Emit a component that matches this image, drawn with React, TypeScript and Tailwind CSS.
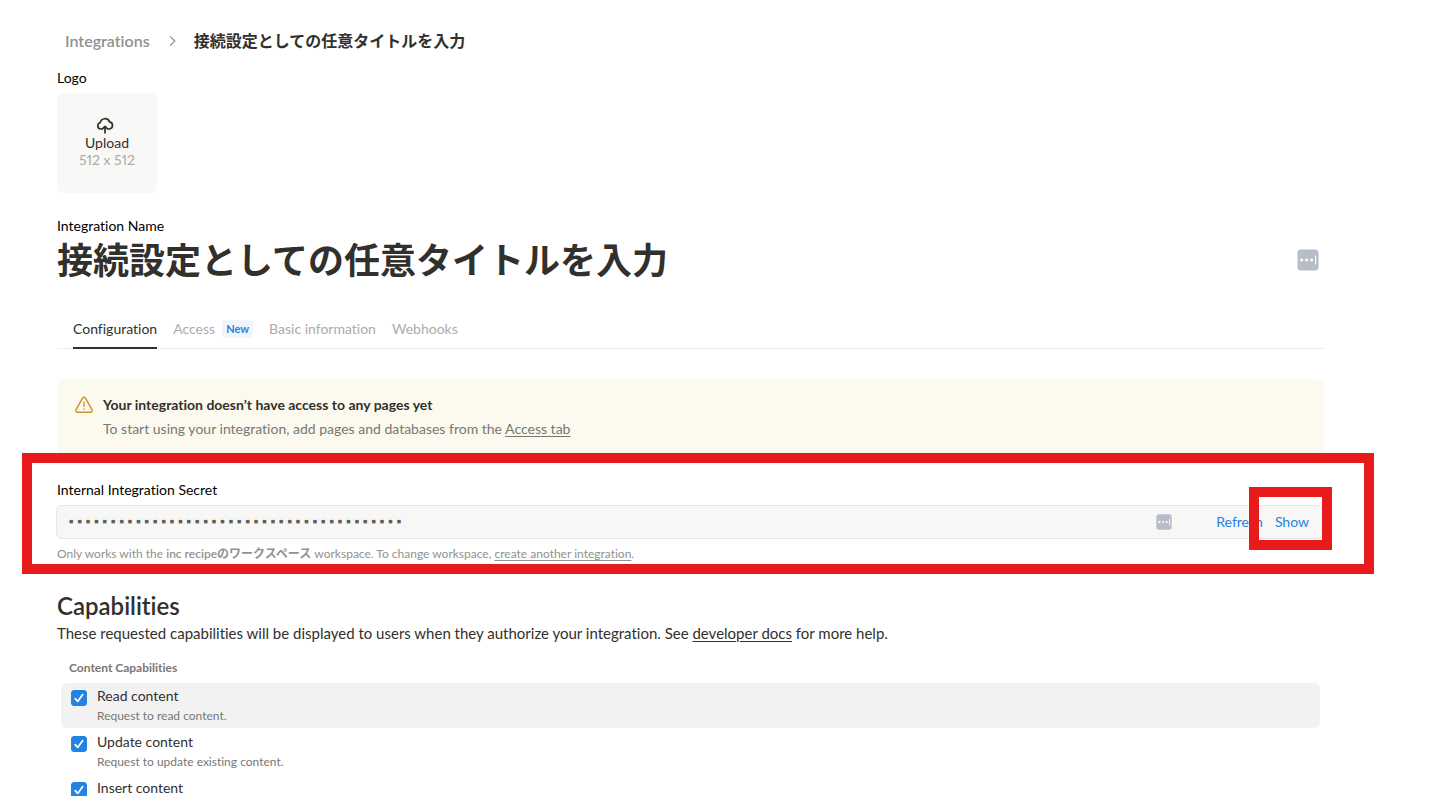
import clsx from "clsx";
import { useState } from "react";

const tabs = [
  { name: "Configuration" },
  { name: "Access", badge: "New" },
  { name: "Basic information" },
  { name: "Webhooks" },
];

const contentCapabilities = [
  {
    id: "read",
    name: "Read content",
    description: "Request to read content.",
    highlighted: true,
  },
  {
    id: "update",
    name: "Update content",
    description: "Request to update existing content.",
  },
  {
    id: "insert",
    name: "Insert content",
    description: "Request to insert new content.",
  },
];

const TITLE = "接続設定としての任意タイトルを入力";
const SECRET = "0".repeat(40);

const PasswordManagerIcon = ({ className }: { className?: string }) => (
  <svg viewBox="0 0 22 22" className={className} aria-hidden="true">
    <rect x="0.5" y="0.5" width="21" height="21" rx="3.5" fill="#b6bdc9" />
    <circle cx="4.6" cy="11" r="1.5" fill="#fff" />
    <circle cx="9.6" cy="11" r="1.5" fill="#fff" />
    <circle cx="14.6" cy="11" r="1.5" fill="#fff" />
    <rect x="18" y="6.5" width="1.2" height="9" fill="#fff" />
  </svg>
);

const UploadIcon = () => (
  <svg
    viewBox="0 0 18 18"
    className="mr-1 h-[18px] w-[18px]"
    fill="none"
    stroke="#32302c"
    strokeWidth="1.7"
    strokeLinejoin="round"
    aria-hidden="true"
  >
    <path d="M6 13H4.8A3.2 3.2 0 0 1 4.2 6.7A4.9 4.9 0 0 1 13.6 5.9A3.6 3.6 0 0 1 13.4 13H12" />
    <path d="M9 17.6V10.6M5.9 13.4L9 10.3L12.1 13.4" />
  </svg>
);

const WarningIcon = () => (
  <svg
    viewBox="0 0 18 18"
    className="h-[18px] w-[18px] shrink-0"
    fill="none"
    stroke="#cb912f"
    strokeWidth="1.4"
    strokeLinecap="round"
    strokeLinejoin="round"
    aria-hidden="true"
  >
    <path d="M7.5 2.1Q9 0.2 10.5 2.1L16.9 13.6Q17.8 16.1 15.6 16.3H2.4Q0.2 16.1 1.1 13.6Z" />
    <path d="M9 6.2V10.2M9 12.9V13.2" />
  </svg>
);

interface CapabilityRowProps {
  id: string;
  name: string;
  description: string;
  highlighted?: boolean;
}

const CapabilityRow = ({
  id,
  name,
  description,
  highlighted,
}: CapabilityRowProps) => (
  <label
    htmlFor={id}
    className={clsx(
      "flex h-[45px] cursor-pointer gap-[10px] rounded-md px-[10px]",
      highlighted && "bg-[#f2f2f2]"
    )}
  >
    <span className="mt-[7px] grid h-4 w-4 shrink-0">
      <input
        id={id}
        type="checkbox"
        defaultChecked
        className="peer col-start-1 row-start-1 h-4 w-4 appearance-none rounded-[3px] border border-[#2383e2] checked:bg-[#2383e2]"
      />
      <svg
        viewBox="0 0 16 16"
        className="pointer-events-none invisible col-start-1 row-start-1 h-4 w-4 peer-checked:visible"
        fill="none"
        stroke="#fff"
        strokeWidth="1.7"
        strokeLinecap="round"
        strokeLinejoin="round"
        aria-hidden="true"
      >
        <path d="M4.2 8.6L6.7 11.4L11.7 4.6" />
      </svg>
    </span>
    <span className="flex flex-col pt-[3px]">
      <span className="text-sm leading-5 text-[#32302c]">{name}</span>
      <span className="text-xs leading-5 text-[#787774]">{description}</span>
    </span>
  </label>
);

export default function App() {
  const [activeTab, setActiveTab] = useState("Configuration");
  const [shown, setShown] = useState(false);

  return (
    <main className="h-screen overflow-y-auto bg-white pt-[27px] pr-[107px] pl-[57px] font-['Lato','Noto_Sans_CJK_JP',sans-serif] text-sm text-[#32302c] [font-variant-ligatures:none] [scrollbar-width:none]">
      <nav className="flex h-7 items-center px-2 text-base leading-7">
        <a href="#" className="font-semibold text-[#91918e]">
          Integrations
        </a>
        <svg
          viewBox="0 0 12 12"
          className="mx-4 h-3 w-3"
          fill="none"
          stroke="#91918e"
          strokeWidth="1.2"
          aria-hidden="true"
        >
          <path d="M4 1.4L8.8 6L4 10.6" />
        </svg>
        <span className="font-bold">{TITLE}</span>
      </nav>

      <section className="mt-[13px]">
        <p className="leading-5 text-black">Logo</p>
        <button
          type="button"
          className="mt-[5px] flex h-[100px] w-[100px] cursor-pointer flex-col items-center justify-center rounded-md bg-[#f8f8f7] pb-[2px] leading-[17px] proportional-nums"
        >
          <UploadIcon />
          <span>Upload</span>
          <span className="text-[#acaba9]">512 x 512</span>
        </button>
      </section>

      <section className="mt-6">
        <label
          htmlFor="integration-name"
          className="block leading-[18px] text-black"
        >
          Integration Name
        </label>
        <div className="flex h-[50px] items-center pr-[5px]">
          <input
            id="integration-name"
            defaultValue={TITLE}
            className="h-[50px] min-w-0 flex-1 text-4xl leading-[50px] font-bold outline-none"
          />
          <PasswordManagerIcon className="h-[22px] w-[22px] shrink-0" />
        </div>
      </section>

      <div
        role="tablist"
        className="mt-7 flex h-9 gap-4 border-b border-[#ededec] px-4"
      >
        {tabs.map((tab) => (
          <button
            key={tab.name}
            type="button"
            role="tab"
            aria-selected={tab.name === activeTab}
            onClick={() => setActiveTab(tab.name)}
            className={clsx(
              "-mb-px flex cursor-pointer items-start gap-[7px] border-b-2 pt-[6px] leading-5",
              tab.name === activeTab
                ? "border-[#32302c] text-[#32302c]"
                : "border-transparent text-[#acaba9]"
            )}
          >
            {tab.name}
            {tab.badge && (
              <span className="mt-px rounded bg-[#eff5fd] px-1 text-[11px] leading-[18px] font-bold text-[#2f7fd8]">
                {tab.badge}
              </span>
            )}
          </button>
        ))}
      </div>

      <section className="mt-[30px] flex h-[76px] gap-[10px] rounded-lg bg-[#fcfaee] px-[18px] pt-[14px]">
        <div className="pt-[3px]">
          <WarningIcon />
        </div>
        <div className="leading-6">
          <p className="font-bold">
            Your integration doesn’t have access to any pages yet
          </p>
          <p className="text-[#787774]">
            To start using your integration, add pages and databases from the{" "}
            <a href="#" className="underline underline-offset-2">
              Access tab
            </a>
          </p>
        </div>
      </section>

      <section className="relative mt-[25px]">
        <label htmlFor="secret" className="block leading-5 text-black">
          Internal Integration Secret
        </label>
        <div className="mt-[5px] -ml-px flex h-[34px] items-center rounded-md border border-[#e6e6e4] bg-[#f7f7f5] pr-[14px] pl-[10px]">
          <input
            id="secret"
            type="text"
            readOnly
            value={shown ? SECRET : "▪".repeat(SECRET.length)}
            className="h-8 min-w-0 flex-1 bg-transparent font-['Liberation_Mono',monospace] text-[#5f5e5b] outline-none"
          />
          <PasswordManagerIcon className="mr-[44px] h-4 w-4 shrink-0" />
          <button type="button" className="mr-3 cursor-pointer text-[#2383e2]">
            Refresh
          </button>
          <button
            type="button"
            className="cursor-pointer text-[#2383e2]"
            onClick={() => setShown(!shown)}
          >
            Show
          </button>
        </div>
        <p className="mt-[5px] text-xs leading-5 text-[#91918e]">
          Only works with the{" "}
          <span className="font-semibold">inc recipeのワークスペース</span>{" "}
          workspace. To change workspace,{" "}
          <a href="#" className="underline underline-offset-2">
            create another integration
          </a>
          .
        </p>

        {/* callout frames laid over the secret field */}
        <div className="pointer-events-none absolute -top-[27px] -right-[50px] -bottom-[10px] -left-[35px] border-10 border-[#e71b1b]" />
        <div className="pointer-events-none absolute top-[7px] -right-2 h-[63px] w-[83px] border-10 border-[#e71b1b]" />
      </section>

      <section className="mt-[27px]">
        <h2 className="text-2xl leading-[30px] font-semibold">Capabilities</h2>
        <p className="text-[15px] leading-6">
          These requested capabilities will be displayed to users when they
          authorize your integration. See{" "}
          <a href="#" className="underline underline-offset-2">
            developer docs
          </a>{" "}
          for more help.
        </p>

        <h3 className="mt-[13px] px-3 text-xs leading-5 font-bold text-[#787774]">
          Content Capabilities
        </h3>
        <div className="mt-[5px] flex flex-col gap-px px-1">
          {contentCapabilities.map((capability) => (
            <CapabilityRow key={capability.id} {...capability} />
          ))}
        </div>
      </section>
    </main>
  );
}
